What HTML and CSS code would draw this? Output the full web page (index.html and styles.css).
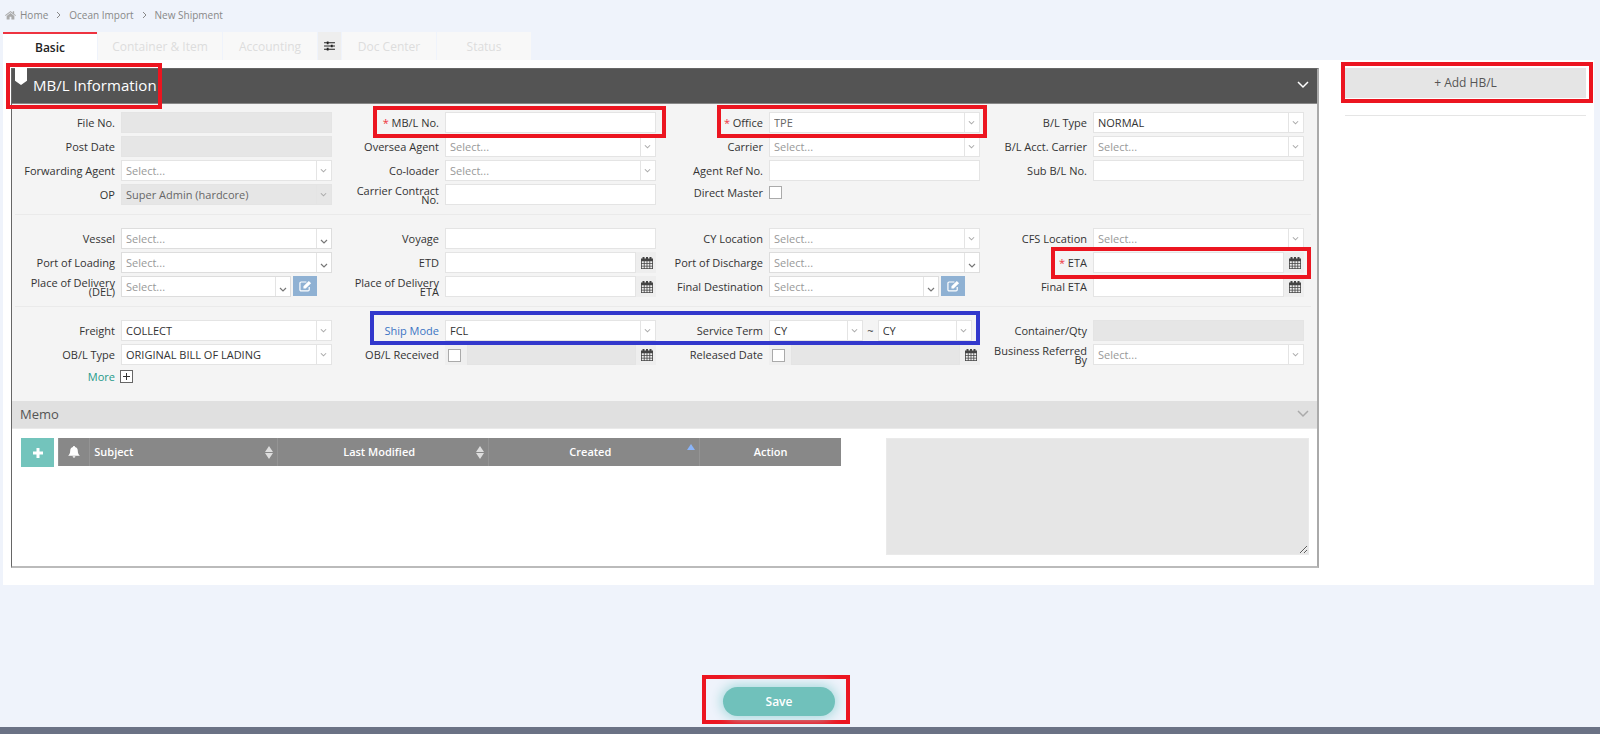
FILE: index.html
```html
<!DOCTYPE html>
<html lang="en">
<head>
<meta charset="utf-8">
<title>New Shipment</title>
<meta name="viewport" content="width=device-width, initial-scale=1">
<link rel="stylesheet" href="styles.css">
</head>
<body>
<svg class="sprite" aria-hidden="true">
  <symbol id="chev" viewBox="0 0 8 6"><path d="M1 1l3 3 3-3" fill="none" stroke="currentColor" stroke-width="1.2"/></symbol>
  <symbol id="cal" viewBox="0 0 12 12"><path fill="currentColor" fill-rule="evenodd" d="M0 1.500h1.500V0h2v1.500h1.500V0h2v1.500h1.500V0h2v1.500H12V12H0zM.8 4.200v1.900h2V4.200zm2.800 0v1.900h2V4.200zm2.800 0v1.900h2V4.200zm2.800 0v1.900h2V4.200zM.8 6.800v1.900h2V6.800zm2.800 0v1.900h2V6.800zm2.800 0v1.900h2V6.800zm2.800 0v1.900h2V6.800zM.8 9.400v1.900h2V9.400zm2.800 0v1.900h2V9.400zm2.800 0v1.900h2V9.400zm2.800 0v1.900h2V9.400z"/></symbol>
  <symbol id="edit" viewBox="0 0 14 12"><path d="M11 7v3a1.300 1.300 0 0 1-1.300 1.300H2.300A1.300 1.300 0 0 1 1 10V3a1.300 1.300 0 0 1 1.300-1.300H8" fill="none" stroke="currentColor" stroke-width="1.300"/><path d="M4.800 8.800V6.400L10.600.6 13 3 7.200 8.800z" fill="currentColor"/></symbol>
  <symbol id="sort" viewBox="0 0 8 13"><path d="M4 0l4 6H0zM0 7h8l-4 6z" fill="currentColor"/></symbol>
</svg>

<nav class="crumbs" aria-label="Breadcrumb">
  <svg class="home" viewBox="0 0 12 10" aria-hidden="true"><path d="M6 .5L0 5.400l.7.8L6 1.900l5.300 4.300.7-.8L10 3.800V.8H8.500v1.700zM6 2.700L1.800 6.100V10H5V7h2v3h3.200V6.100z" fill="currentColor"/></svg>
  <a href="#">Home</a>
  <svg class="sep" viewBox="0 0 5 8" aria-hidden="true"><path d="M1 1l3 3-3 3" fill="none" stroke="currentColor"/></svg>
  <a href="#">Ocean Import</a>
  <svg class="sep" viewBox="0 0 5 8" aria-hidden="true"><path d="M1 1l3 3-3 3" fill="none" stroke="currentColor"/></svg>
  <a href="#">New Shipment</a>
</nav>

<div class="tabs">
  <button class="tab active" type="button">Basic</button>
  <button class="tab wide" type="button">Container &amp; Item</button>
  <button class="tab" type="button">Accounting</button>
  <button class="tab tune" type="button" aria-label="Accounting options"><svg viewBox="0 0 12 11" aria-hidden="true"><path d="M0 2h12M0 5.500h12M0 9h12" stroke="currentColor" stroke-width="1.200"/><path d="M4 .5v3M8.500 4v3M4 7.500v3" stroke="currentColor" stroke-width="2"/></svg></button>
  <button class="tab" type="button">Doc Center</button>
  <button class="tab" type="button">Status</button>
</div>

<main class="workspace">
  <section class="panel">
    <header class="panel-head mark">
      <span class="ribbon"></span>
      <h1>MB/L Information</h1>
      <svg class="fold" viewBox="0 0 12 8" aria-hidden="true"><path d="M1 1l5 5 5-5" fill="none" stroke="currentColor" stroke-width="1.500"/></svg>
    </header>

    <form class="form">
      <div class="rows">
        <div class="field"><label for="fileno">File No.</label><input id="fileno" type="text" disabled></div>
        <div class="field mark"><label for="mblno"><i>*</i> MB/L No.</label><input id="mblno" type="text"></div>
        <div class="field mark tall"><label for="office"><i>*</i> Office</label><span class="pick soft"><select id="office"><option>TPE</option></select><svg><use href="#chev"/></svg></span></div>
        <div class="field"><label for="bltype">B/L Type</label><span class="pick"><select id="bltype"><option>NORMAL</option></select><svg><use href="#chev"/></svg></span></div>

        <div class="field"><label for="postdate">Post Date</label><input id="postdate" type="text" disabled></div>
        <div class="field"><label for="oversea">Oversea Agent</label><span class="pick empty"><select id="oversea"><option>Select...</option></select><svg><use href="#chev"/></svg></span></div>
        <div class="field"><label for="carrier">Carrier</label><span class="pick empty"><select id="carrier"><option>Select...</option></select><svg><use href="#chev"/></svg></span></div>
        <div class="field"><label for="acct">B/L Acct. Carrier</label><span class="pick empty"><select id="acct"><option>Select...</option></select><svg><use href="#chev"/></svg></span></div>

        <div class="field"><label for="fwd">Forwarding Agent</label><span class="pick empty"><select id="fwd"><option>Select...</option></select><svg><use href="#chev"/></svg></span></div>
        <div class="field"><label for="coload">Co-loader</label><span class="pick empty"><select id="coload"><option>Select...</option></select><svg><use href="#chev"/></svg></span></div>
        <div class="field"><label for="agentref">Agent Ref No.</label><input id="agentref" type="text"></div>
        <div class="field"><label for="subbl">Sub B/L No.</label><input id="subbl" type="text"></div>

        <div class="field"><label for="op">OP</label><span class="pick off"><select id="op" disabled><option>Super Admin (hardcore)</option></select><svg><use href="#chev"/></svg></span></div>
        <div class="field"><label for="contract">Carrier Contract No.</label><input id="contract" type="text"></div>
        <div class="field short"><label for="direct">Direct Master</label><input id="direct" type="checkbox"></div>
      </div>

      <div class="rows">
        <div class="field"><label for="vessel">Vessel</label><span class="pick empty combo"><select id="vessel"><option>Select...</option></select><svg><use href="#chev"/></svg></span></div>
        <div class="field"><label for="voyage">Voyage</label><input id="voyage" type="text"></div>
        <div class="field"><label for="cy">CY Location</label><span class="pick empty"><select id="cy"><option>Select...</option></select><svg><use href="#chev"/></svg></span></div>
        <div class="field"><label for="cfs">CFS Location</label><span class="pick empty"><select id="cfs"><option>Select...</option></select><svg><use href="#chev"/></svg></span></div>

        <div class="field"><label for="pol">Port of Loading</label><span class="pick empty combo"><select id="pol"><option>Select...</option></select><svg><use href="#chev"/></svg></span></div>
        <div class="field"><label for="etd">ETD</label><span class="date"><input id="etd" type="text"><button type="button" aria-label="Pick ETD"><svg><use href="#cal"/></svg></button></span></div>
        <div class="field"><label for="pod">Port of Discharge</label><span class="pick empty combo"><select id="pod"><option>Select...</option></select><svg><use href="#chev"/></svg></span></div>
        <div class="field mark eta"><label for="eta"><i>*</i> ETA</label><span class="date"><input id="eta" type="text"><button type="button" aria-label="Pick ETA"><svg><use href="#cal"/></svg></button></span></div>

        <div class="field"><label for="del">Place of Delivery (DEL)</label><span class="with-edit"><span class="pick empty combo"><select id="del"><option>Select...</option></select><svg><use href="#chev"/></svg></span><button class="edit" type="button" aria-label="Edit place of delivery"><svg><use href="#edit"/></svg></button></span></div>
        <div class="field"><label for="deleta">Place of Delivery ETA</label><span class="date"><input id="deleta" type="text"><button type="button" aria-label="Pick delivery ETA"><svg><use href="#cal"/></svg></button></span></div>
        <div class="field"><label for="dest">Final Destination</label><span class="with-edit"><span class="pick empty combo"><select id="dest"><option>Select...</option></select><svg><use href="#chev"/></svg></span><button class="edit" type="button" aria-label="Edit final destination"><svg><use href="#edit"/></svg></button></span></div>
        <div class="field"><label for="finaleta">Final ETA</label><span class="date"><input id="finaleta" type="text"><button type="button" aria-label="Pick final ETA"><svg><use href="#cal"/></svg></button></span></div>
      </div>

      <div class="rows last">
        <div class="field"><label for="freight">Freight</label><span class="pick"><select id="freight"><option>COLLECT</option></select><svg><use href="#chev"/></svg></span></div>
        <div class="pair">
          <div class="field"><label class="blue" for="mode">Ship Mode</label><span class="pick"><select id="mode"><option>FCL</option></select><svg><use href="#chev"/></svg></span></div>
          <div class="field"><label for="term1">Service Term</label><span class="terms"><span class="pick"><select id="term1"><option>CY</option></select><svg><use href="#chev"/></svg></span><span>~</span><span class="pick"><select aria-label="Service term to"><option>CY</option></select><svg><use href="#chev"/></svg></span></span></div>
        </div>
        <div class="field"><label for="qty">Container/Qty</label><input id="qty" type="text" disabled></div>

        <div class="field"><label for="obltype">OB/L Type</label><span class="pick"><select id="obltype"><option>ORIGINAL BILL OF LADING</option></select><svg><use href="#chev"/></svg></span></div>
        <div class="field"><label for="oblrec">OB/L Received</label><span class="date check"><input id="oblrec" type="checkbox"><input type="text" aria-label="OB/L received date" disabled><button type="button" aria-label="Pick received date"><svg><use href="#cal"/></svg></button></span></div>
        <div class="field"><label for="released">Released Date</label><span class="date check"><input id="released" type="checkbox"><input type="text" aria-label="Released on" disabled><button type="button" aria-label="Pick released date"><svg><use href="#cal"/></svg></button></span></div>
        <div class="field"><label for="business">Business Referred By</label><span class="pick empty"><select id="business"><option>Select...</option></select><svg><use href="#chev"/></svg></span></div>

        <div class="field more"><a href="#">More</a><button type="button" aria-label="Show more"><svg viewBox="0 0 11 11"><path d="M2 5.500h7M5.500 2v7" stroke="currentColor"/></svg></button></div>
      </div>
    </form>

    <header class="memo-head">
      <h2>Memo</h2>
      <svg class="fold" viewBox="0 0 12 8" aria-hidden="true"><path d="M1 1l5 5 5-5" fill="none" stroke="currentColor" stroke-width="1.500"/></svg>
    </header>
    <div class="memo">
      <button class="add" type="button" aria-label="Add memo"><svg viewBox="0 0 10 10"><path d="M0 5h10M5 0v10" stroke="currentColor" stroke-width="3"/></svg></button>
      <table>
        <colgroup><col class="c-bell"><col class="c-subject"><col class="c-date"><col class="c-date"><col></colgroup>
        <thead><tr>
          <th><svg class="bell" viewBox="0 0 12 12" role="img" aria-label="Reminder"><path d="M6 0c.7 0 1 .4 1 .9C8.800 1.300 9.800 2.700 9.800 4.700c0 2.600.8 3.900 2.200 5.100H0c1.400-1.200 2.200-2.500 2.200-5.100C2.200 2.700 3.200 1.300 5 .9 5 .4 5.300 0 6 0zM4.600 10.300h2.800a1.400 1.400 0 0 1-2.800 0z" fill="currentColor"/></svg></th>
          <th class="left"><div><span>Subject</span><svg class="sort"><use href="#sort"/></svg></div></th>
          <th><div><span>Last Modified</span><svg class="sort"><use href="#sort"/></svg></div></th>
          <th><div><span>Created</span><svg class="sort up" viewBox="0 0 8 13"><path d="M4 0l4 6H0z" fill="currentColor"/></svg></div></th>
          <th>Action</th>
        </tr></thead>
      </table>
      <textarea aria-label="Memo text" disabled></textarea>
    </div>
  </section>

  <aside class="side">
    <div class="mark"><button class="add-hbl" type="button">+ Add HB/L</button></div>
    <hr>
  </aside>
</main>

<footer class="actions">
  <div class="save-box"><button class="save" type="button">Save</button></div>
</footer>
<div class="bottom-bar"></div>
</body>
</html>
```
FILE: styles.css
```css
*, *::after { box-sizing: border-box; }

body {
  margin: 0;
  min-height: 100vh;
  display: flex;
  flex-direction: column;
  background: #eff3fb;
  color: #333;
  font: 11px/16px "Open Sans", "Liberation Sans", sans-serif;
}

button, input, select, textarea {
  margin: 0;
  padding: 0;
  border: 0;
  border-radius: 0;
  font: inherit;
  color: inherit;
  background: none;
}
h1, h2 { margin: 0; font-weight: 400; }
a { color: inherit; text-decoration: none; }
.sprite { position: absolute; width: 0; height: 0; }

/* breadcrumb */
.crumbs {
  display: flex;
  align-items: center;
  height: 32px;
  padding: 0 5px 2px;
  color: #888;
  font-size: 10px;
}
.home { width: 11px; height: 10px; margin-right: 4px; color: #aaa; }
.sep { width: 5px; height: 8px; margin: 0 8px; }

/* tabs */
.tabs { display: flex; gap: 1px; padding-left: 3px; }
.tab {
  width: 94px;
  height: 28px;
  padding-top: 2px;
  background: #f8f8f8;
  color: #ddd;
  font-size: 12px;
  text-align: center;
}
.tab.wide { width: 124px; }
.tab.active {
  border-top: 2px solid #ee3340;
  background: #fff;
  color: #222;
  font-weight: 600;
}
.tab.tune { width: 23px; background: #eee; color: #222; }
.tune svg { width: 11px; height: 10px; }

/* page body */
.workspace {
  display: flex;
  align-items: flex-start;
  gap: 26px;
  margin: 0 6px 0 3px;
  padding: 8px 8px 17px 8px;
  background: #fff;
}
.panel {
  flex: 1;
  min-width: 0;
  border: 1px solid #666;
  border-right: 2px solid #aaa;
  border-bottom: 2px solid #bbb;
}
.panel-head {
  display: flex;
  align-items: center;
  height: 35px;
  padding: 0 8px 2px 21px;
  background: #545454;
  border-bottom: 1px solid #888;
  color: #fff;
}
.panel-head h1 { flex: 1; font-size: 15px; }
.fold { width: 12px; height: 8px; }
.ribbon {
  position: absolute;
  top: -1px;
  left: 3px;
  width: 12px;
  height: 17px;
  background: #fff;
  clip-path: polygon(0 0, 100% 0, 100% 75%, 50% 100%, 0 75%);
}

/* highlight frames */
.mark { position: relative; }
.mark::after {
  content: "";
  position: absolute;
  inset: -6px -3px -5px 34px;
  border: 4px solid #ec1520;
  pointer-events: none;
}
.mark.tall::after { inset: -7px 0 -5px 54px; }
.mark.eta::after { inset: -5px 0 -6px 64px; }
.panel-head.mark::after { inset: -6px auto -6px -6px; width: 156px; }
.side .mark::after { inset: -6px -7px -5px -4px; }

/* form */
.form { background: #f4f4f4; padding: 8px 6px 16px 3px; }
.rows {
  display: grid;
  grid-template-columns: repeat(4, 1fr);
  row-gap: 3px;
}
.rows + .rows { margin-top: 9px; padding-top: 13px; border-top: 1px solid #eaeaea; }
.field {
  display: grid;
  grid-template-columns: 100px 1fr;
  column-gap: 6px;
  align-items: center;
  height: 21px;
  padding-right: 7px;
}
.field label { line-height: 9px; text-align: right; }
.field i { color: #ee3340; font-style: normal; }
.field.short { height: 17px; }
.blue { color: #3c74c4; }

.field input[type="text"], .pick {
  width: 100%;
  min-width: 0;
  height: 21px;
  border: 1px solid #e4e4e4;
  background: #fff;
}
.field input[type="text"]:disabled, .pick.off { background: #e6e6e6; }
.field input[type="checkbox"] {
  appearance: none;
  width: 13px;
  height: 13px;
  border: 1px solid #aaa;
  background: #fff;
}

.pick { display: flex; }
.pick select {
  appearance: none;
  flex: 1;
  min-width: 0;
  padding-left: 4px;
  opacity: 1;
}
.pick.empty select { color: #999; }
.pick.soft select, .pick.off select { color: #666; }
.pick svg {
  flex: none;
  width: 15px;
  height: 19px;
  padding: 7px 4px 6px 3px;
  border-left: 1px solid #e4e4e4;
  color: #aaa;
}
.pick.combo { border-color: #ddd; }
.pick.combo svg { color: #777; padding: 10px 3px 3px 3px; }
.pick.combo select { padding-top: 1px; }

.date { display: flex; }
.date input[type="text"] { flex: 1; }
.date button {
  flex: none;
  width: 20px;
  height: 21px;
  padding: 1px 0 0 1px;
  background: #eee;
  color: #444;
}
.date svg { display: block; width: 12px; height: 12px; margin: 0 auto; }
.date.check { align-items: center; background: #efefef; }
.date.check input[type="checkbox"] { flex: none; margin: 1px 6px 0 3px; }

.with-edit { display: flex; gap: 2px; padding-right: 15px; }
.edit { flex: none; width: 24px; height: 20px; background: #8fb1d3; color: #fff; }
.edit svg { display: block; width: 13px; height: 12px; margin: 0 auto; }

.pair {
  position: relative;
  grid-column: span 2;
  display: grid;
  grid-template-columns: 1fr 1fr;
}
.pair::after {
  content: "";
  position: absolute;
  inset: -9px 7px -4px 31px;
  border: 4px solid #3238cc;
  pointer-events: none;
}
.terms { display: flex; align-items: center; gap: 4px; padding-right: 8px; }
.terms .pick { flex: 1; }

.more { height: 17px; }
.more a { text-align: right; color: #1f9a8a; }
.more button { width: 11px; height: 11px; outline: 1px solid #666; background: #fff; color: #333; }
.more svg { display: block; width: 11px; height: 11px; }

/* memo */
.memo-head {
  display: flex;
  align-items: center;
  height: 28px;
  padding: 0 8px 2px;
  border-bottom: 1px solid #eaeaea;
  background: #e0e0e0;
  color: #aaa;
}
.memo-head h2 { flex: 1; font-size: 13px; color: #555; }
.memo { display: flex; align-items: flex-start; padding: 9px 8px 11px 9px; }
.add { flex: none; width: 33px; height: 29px; margin-right: 4px; background: #73c4bc; color: #fff; }
.add svg { width: 10px; height: 10px; display: block; margin: 0 auto; }
.memo table {
  flex: 65;
  min-width: 0;
  table-layout: fixed;
  border-collapse: collapse;
  background: #888;
  color: #fff;
}
.c-bell { width: 4%; }
.c-subject { width: 24%; }
.c-date { width: 27%; }
.memo th {
  height: 28px;
  padding: 0 4px;
  border-left: 1px solid #949494;
  font-weight: 600;
}
.memo th > div { display: flex; align-items: center; }
.memo th span { flex: 1; }
.memo th.left span { text-align: left; }
.bell { display: block; width: 12px; height: 12px; margin: 0 auto; }
.sort { width: 8px; height: 13px; color: #ddd; }
.sort.up { color: #8ab4f8; margin-bottom: 4px; }
.memo textarea {
  flex: 35;
  height: 117px;
  margin-left: 45px;
  border: 1px solid #eaeaea;
  background: #e6e6e6;
}

/* side column */
.side { flex: none; width: 241px; }
.add-hbl { display: block; width: 100%; height: 30px; background: #e5e5e5; color: #555; font-size: 12px; }
.side hr { height: 1px; margin: 17px 0 0; border: 0; background: #e5e5e5; }

/* footer */
.actions { display: flex; flex: 1; align-items: flex-end; justify-content: center; padding: 0 48px 3px 0; }
.save-box { padding: 8px 11px 4px 17px; border: 4px solid #ec1520; }
.save {
  width: 112px;
  height: 29px;
  border-radius: 15px;
  background: #70c1bb;
  box-shadow: 0 0 12px 2px #a5d9dc;
  color: #fff;
  font-size: 12px;
  font-weight: 600;
}
.bottom-bar { height: 7px; background: #6b7285; }
```
